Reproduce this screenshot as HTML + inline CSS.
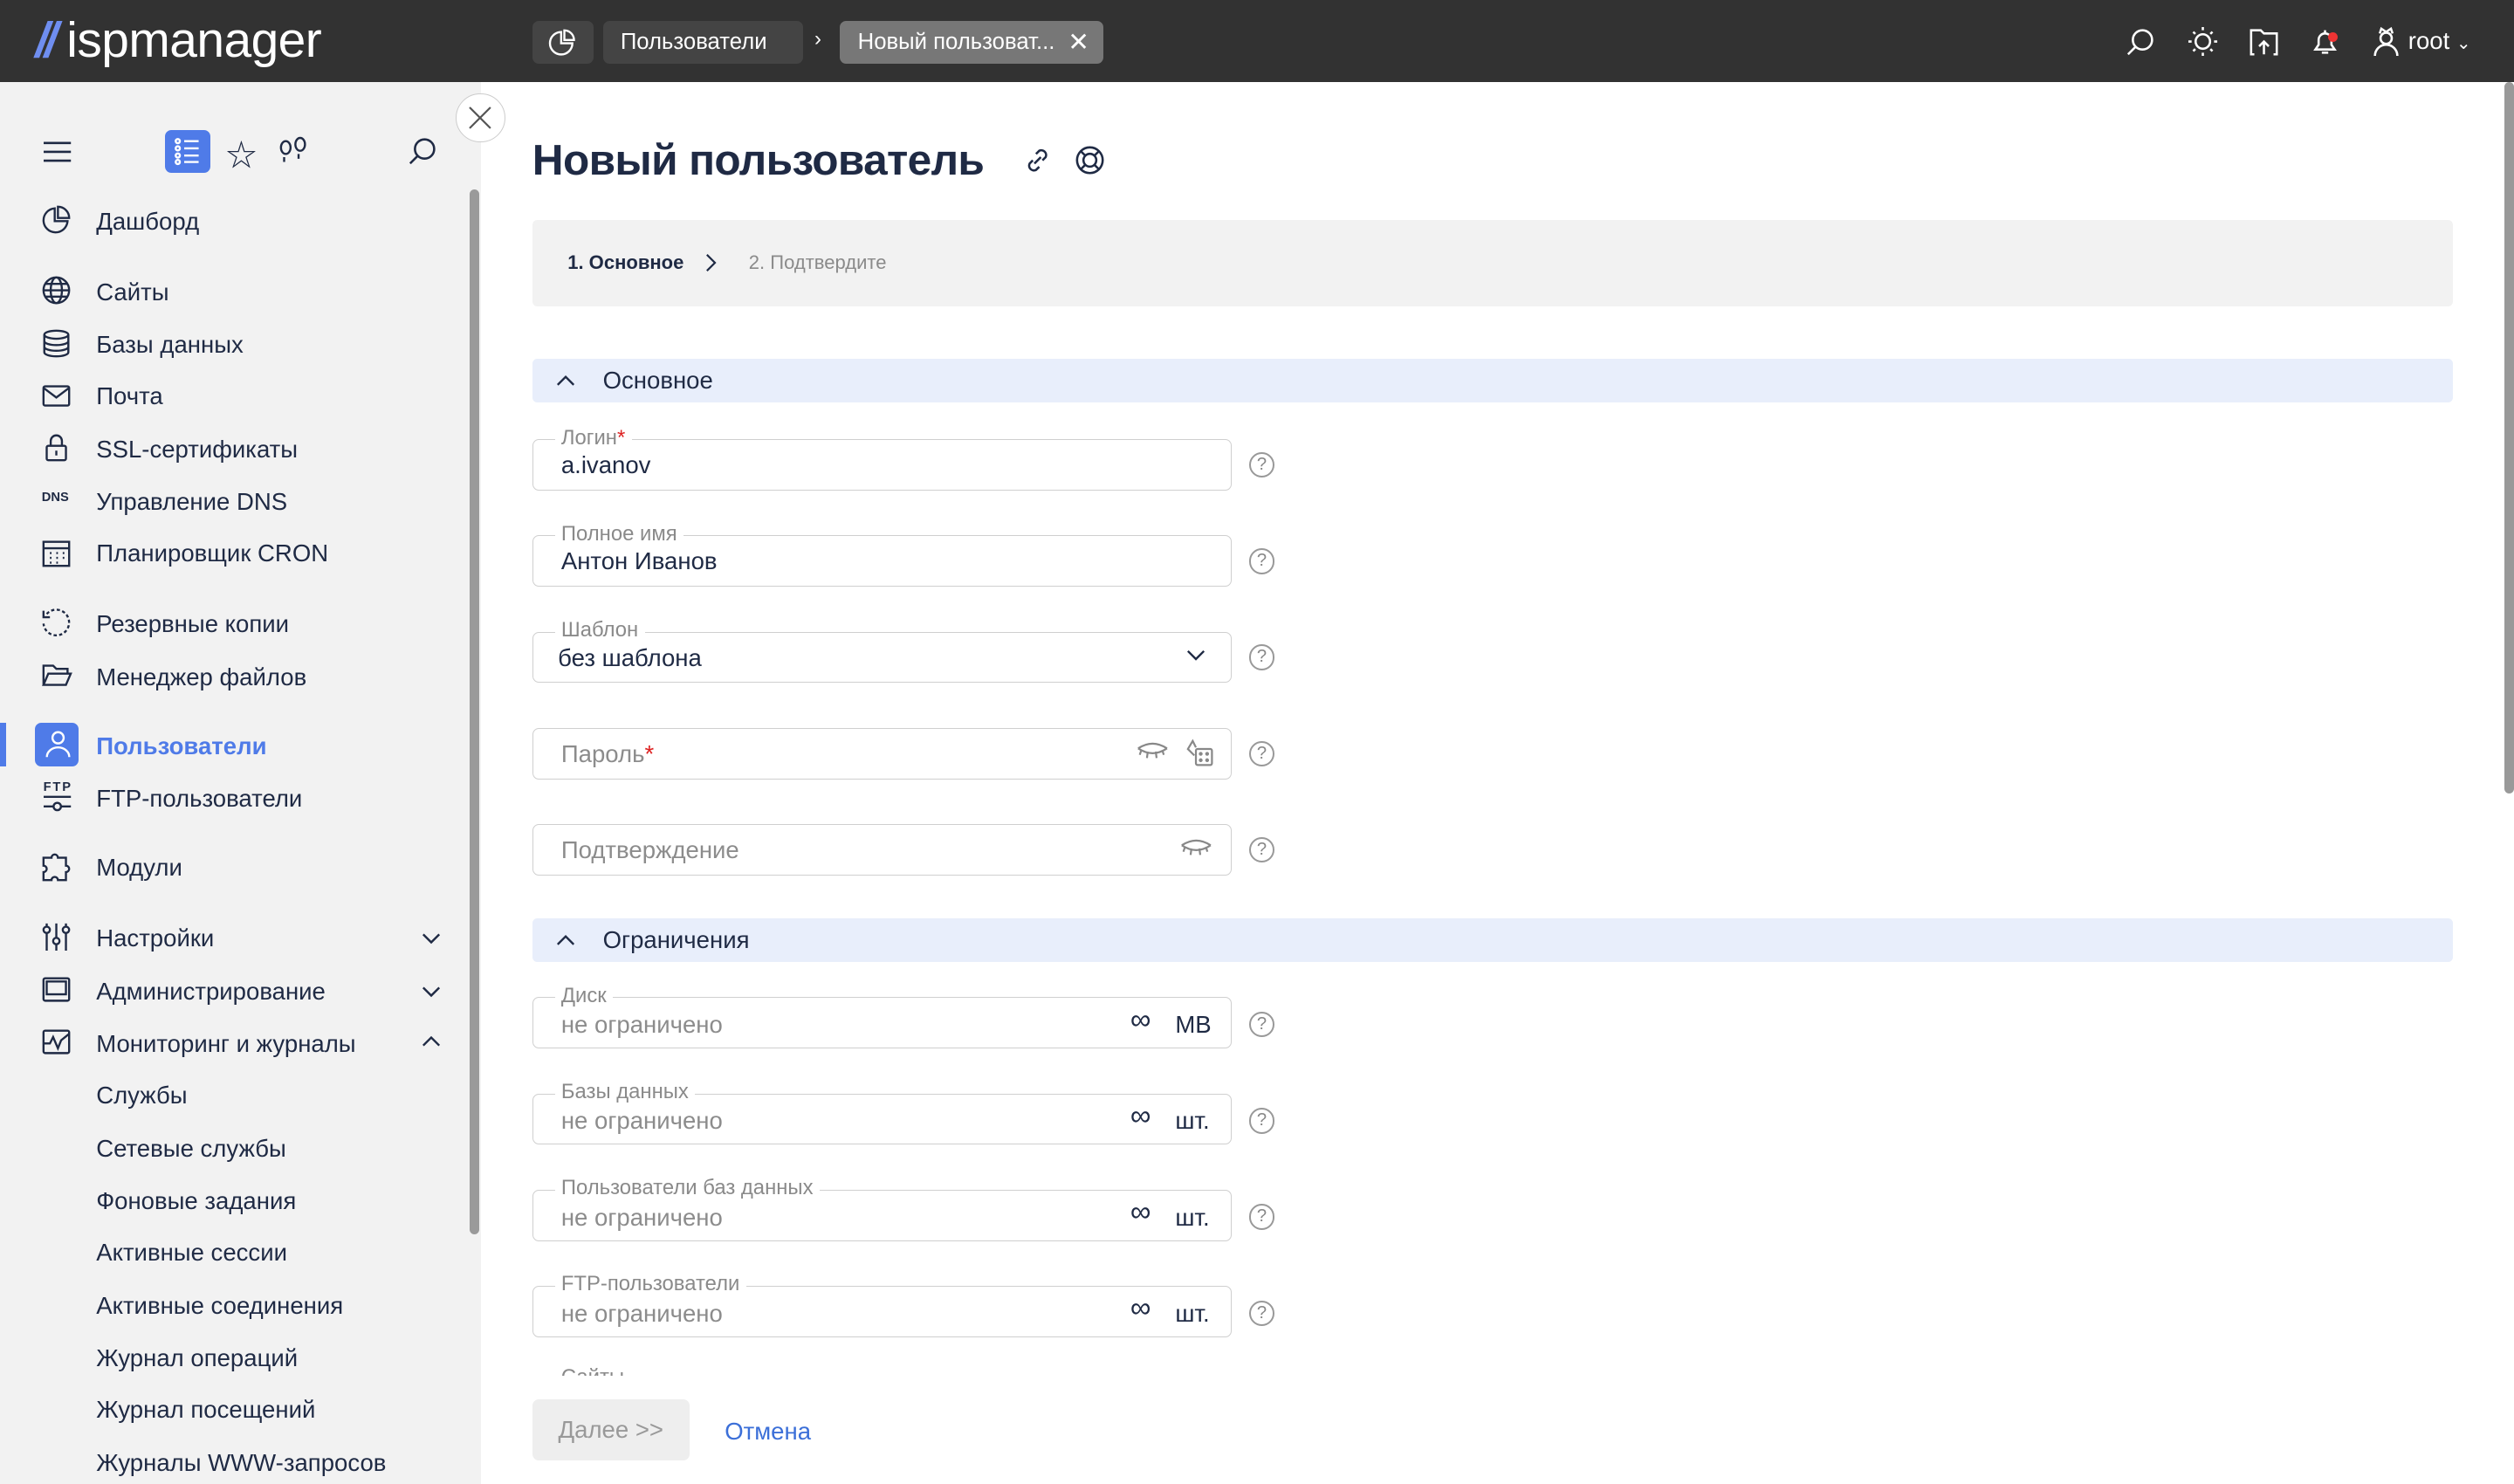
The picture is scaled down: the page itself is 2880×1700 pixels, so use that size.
<!DOCTYPE html>
<html><head><meta charset="utf-8"><style>
*{box-sizing:border-box;margin:0;padding:0}
html,body{width:2880px;height:1700px;overflow:hidden;background:#fff}
#w{zoom:1.83673;width:1568px;height:926px;position:relative;font-family:"Liberation Sans","Noto Sans CJK SC",sans-serif;color:#1f2a44}
.a{position:absolute}
.top{left:0;top:0;width:1568px;height:51px;background:#323232}
.side{left:0;top:51px;width:300px;height:875px;background:#f2f2f2}
.it{position:absolute;left:60px;font-size:15px;white-space:nowrap;line-height:18px}
.ic{position:absolute;left:26px;width:18px;height:18px}
.sub{position:absolute;left:60px;font-size:15px;line-height:18px}
.chev{position:absolute;left:263px;width:12px;height:12px}
.fld{position:absolute;left:332px;width:436px;height:32px;border:1px solid #cfcfcf;border-radius:4px;background:#fff}
.lbl{position:absolute;left:346px;font-size:13px;color:#8a8a8a;background:#fff;padding:0 4px;line-height:14px}
.val{position:absolute;left:350px;font-size:15px;line-height:18px}
.ph{color:#8c8c8c}
.q{position:absolute;left:779px;width:16px;height:16px;border:1.3px solid #999;border-radius:50%;font-size:11px;color:#888;text-align:center;line-height:14px}
.sec{position:absolute;left:332px;width:1198px;height:27px;background:#e8eefb;border-radius:3px;font-size:15px;line-height:27px;padding-left:44px}
.unit{position:absolute;left:733px;font-size:15px;line-height:18px}
svg{overflow:visible}
</style></head><body><div id="w">
<div class="a top">
 <div class="a" style="left:22px;top:7px;font-size:31px;color:#fff;font-weight:normal;letter-spacing:-0.3px"><span style="color:#6f8ef0;font-style:italic;font-weight:bold;letter-spacing:-3px">//</span> ispmanager</div>
 <div class="a" style="left:332px;top:13px;width:38px;height:27px;background:#444;border-radius:4px"></div>
 <svg class="a" style="left:343px;top:18px" width="16" height="17" viewBox="0 0 16 17" fill="none" stroke="#fff" stroke-width="1.3"><path d="M7 2A7 7 0 1 0 14 9H7Z"/><path d="M9 1v6h6A6 6 0 0 0 9 1Z"/></svg>
 <div class="a" style="left:376px;top:13px;width:125px;height:27px;background:#444;border-radius:4px;color:#fff;font-size:14px;line-height:27px;padding-left:11px">Пользователи</div>
 <div class="a" style="left:508px;top:17px;color:#fff;font-size:13px">›</div>
 <div class="a" style="left:524px;top:13px;width:164px;height:27px;background:#777;border-radius:4px;color:#fff;font-size:14px;line-height:27px;padding-left:11px">Новый пользоват... <span style="position:absolute;left:142px;font-size:16px">✕</span></div>
 <svg class="a" style="left:1326px;top:17px" width="18" height="18" fill="none" stroke="#fff" stroke-width="1.4"><circle cx="10" cy="8" r="6"/><path d="M6 12L1 17"/></svg>
 <svg class="a" style="left:1365px;top:17px" width="18" height="18" fill="none" stroke="#fff" stroke-width="1.4"><circle cx="9" cy="9" r="4.5"/><path d="M9 0v2M9 16v2M0 9h2M16 9h2M3 3l1.3 1.3M13.7 13.7L15 15M3 15l1.3-1.3M13.7 4.3L15 3"/></svg>
 <svg class="a" style="left:1403px;top:17px" width="18" height="18" fill="none" stroke="#fff" stroke-width="1.4"><path d="M3 17H1V2h6l2 2h8v13h-2M9 17V9M6 12l3-3 3 3"/></svg>
 <svg class="a" style="left:1441px;top:17px" width="18" height="18" fill="none" stroke="#fff" stroke-width="1.4"><path d="M3 14h12l-2-3V8a4 4 0 0 0-8 0v3zM7 16h4M9 2v2"/></svg>
 <div class="a" style="left:1452px;top:20px;width:6px;height:6px;background:#e33;border-radius:50%"></div>
 <svg class="a" style="left:1479px;top:17px" width="18" height="18" fill="none" stroke="#fff" stroke-width="1.4"><circle cx="9" cy="7" r="3.5"/><path d="M2 18a7 7 0 0 1 14 0M5 4l1-3 3 2 3-2 1 3"/></svg>
 <div class="a" style="left:1502px;top:17px;color:#fff;font-size:15px">root <span style="font-size:11px">⌄</span></div>
</div>

<div class="a side">
 <svg class="a" style="left:27px;top:37px" width="17" height="13" stroke="#1f2a44" stroke-width="1.4"><path d="M0 1h17M0 6.5h17M0 12h17"/></svg>
 <div class="a" style="left:103px;top:30px;width:28px;height:27px;background:#4f7be8;border-radius:4px"></div>
 <svg class="a" style="left:109px;top:35px" width="16" height="17" fill="none" stroke="#fff" stroke-width="1.3"><circle cx="2" cy="2" r="1.3"/><circle cx="2" cy="6.5" r="1.3"/><circle cx="2" cy="11" r="1.3"/><circle cx="2" cy="15" r="1.3"/><path d="M6 2h9M6 6.5h9M6 11h9M6 15h9"/></svg>
 <div class="a" style="left:141px;top:31px;font-size:19px">☆</div>
 <svg class="a" style="left:174px;top:35px" width="18" height="16" fill="none" stroke="#1f2a44" stroke-width="1.3"><ellipse cx="4" cy="6" rx="3" ry="4"/><ellipse cx="13" cy="4" rx="3" ry="4"/><path d="M3 12v3M12 10v3"/></svg>
 <svg class="a" style="left:255px;top:34px" width="18" height="18" fill="none" stroke="#1f2a44" stroke-width="1.4"><circle cx="10" cy="8" r="6"/><path d="M6 12L1 17"/></svg>
 <div class="a" style="left:293px;top:67px;width:6px;height:652px;background:#9a9a9a;border-radius:3px"></div>
</div>
<div class="a" style="left:284px;top:58px;width:31px;height:31px;border-radius:50%;background:#fff;border:1px solid #ccc"></div>
<svg class="a" style="left:293px;top:67px" width="13" height="13" stroke="#555" stroke-width="1.2"><path d="M0 0l13 13M13 0L0 13"/></svg>

<div id="nav">
<svg class="ic" style="top:128px" viewBox="0 0 18 18" fill="none" stroke="#1f2a44" stroke-width="1.3"><path d="M8 2A7.5 7.5 0 1 0 16 10H8Z"/><path d="M10 1v7h7A7 7 0 0 0 10 1Z"/></svg><div class="it" style="top:129px">Дашборд</div>
<svg class="ic" style="top:172px" viewBox="0 0 18 18" fill="none" stroke="#1f2a44" stroke-width="1.3"><circle cx="9" cy="9" r="8"/><ellipse cx="9" cy="9" rx="3.5" ry="8"/><path d="M1 9h16M2 5h14M2 13h14"/></svg><div class="it" style="top:173px">Сайты</div>
<svg class="ic" style="top:205px" viewBox="0 0 18 18" fill="none" stroke="#1f2a44" stroke-width="1.3"><ellipse cx="9" cy="3.5" rx="7.5" ry="2.5"/><path d="M1.5 3.5v11c0 1.4 3.4 2.5 7.5 2.5s7.5-1.1 7.5-2.5v-11M1.5 7.5c0 1.4 3.4 2.5 7.5 2.5s7.5-1.1 7.5-2.5M1.5 11c0 1.4 3.4 2.5 7.5 2.5s7.5-1.1 7.5-2.5"/></svg><div class="it" style="top:206px">Базы данных</div>
<svg class="ic" style="top:238px" viewBox="0 0 18 18" fill="none" stroke="#1f2a44" stroke-width="1.3"><rect x="1" y="3" width="16" height="12" rx="1"/><path d="M1 4l8 6 8-6"/></svg><div class="it" style="top:238px">Почта</div>
<svg class="ic" style="top:270px" viewBox="0 0 18 18" fill="none" stroke="#1f2a44" stroke-width="1.3"><rect x="3" y="8" width="12" height="9" rx="1"/><path d="M5.5 8V5a3.5 3.5 0 0 1 7 0v3M9 11v3"/></svg><div class="it" style="top:271px">SSL-сертификаты</div>
<div class="a" style="left:26px;top:306px;font-size:8px;font-weight:bold">DNS</div><div class="it" style="top:304px">Управление DNS</div>
<svg class="ic" style="top:336px" viewBox="0 0 18 18" fill="none" stroke="#1f2a44" stroke-width="1.3"><rect x="1" y="2" width="16" height="15"/><path d="M1 6h16M5 9h1M9 9h1M13 9h1M5 12h1M9 12h1M13 12h1M5 15h1M9 15h1"/></svg><div class="it" style="top:336px">Планировщик CRON</div>
<svg class="ic" style="top:379px" viewBox="0 0 18 18" fill="none" stroke="#1f2a44" stroke-width="1.3"><path d="M3 4a8 8 0 1 1-2 6" stroke-dasharray="2 1.5"/><path d="M1 2v4h4"/></svg><div class="it" style="top:380px">Резервные копии</div>
<svg class="ic" style="top:412px" viewBox="0 0 18 18" fill="none" stroke="#1f2a44" stroke-width="1.3"><path d="M1 15V3h6l2 2h7v3M1 15l3-7h14l-3 7z"/></svg><div class="it" style="top:413px">Менеджер файлов</div>
<div class="a" style="left:0;top:451px;width:4px;height:27px;background:#4f7be8"></div>
<div class="a" style="left:22px;top:451px;width:27px;height:27px;background:#4f7be8;border-radius:4px"></div>
<svg class="a" style="left:27px;top:455px" width="18" height="18" fill="none" stroke="#fff" stroke-width="1.3"><circle cx="9" cy="5" r="3.5"/><path d="M2 17a7 6 0 0 1 14 0"/></svg>
<div class="it" style="top:456px;color:#4f7be8;font-weight:bold">Пользователи</div>
<div class="a" style="left:27px;top:487px;font-size:8px;font-weight:bold;letter-spacing:1px">FTP</div><svg class="a" style="left:27px;top:496px" width="18" height="10" fill="none" stroke="#1f2a44" stroke-width="1.3"><path d="M0 1h17M0 7h6M11 7h6"/><circle cx="8.5" cy="7" r="2.3"/></svg><div class="it" style="top:489px">FTP-пользователи</div>
<svg class="ic" style="top:532px" viewBox="0 0 18 18" fill="none" stroke="#1f2a44" stroke-width="1.3"><path d="M1 3h5a2 2 0 0 1 4 0h5v5a2 2 0 0 1 0 4v5h-5a2 2 0 0 0-4 0H1v-5a2 2 0 0 0 0-4z"/></svg><div class="it" style="top:532px">Модули</div>
<svg class="ic" style="top:575px" viewBox="0 0 18 18" fill="none" stroke="#1f2a44" stroke-width="1.3"><path d="M3 1v17M9 1v17M15 1v17"/><circle cx="3" cy="5" r="2" fill="#f2f2f2"/><circle cx="9" cy="12" r="2" fill="#f2f2f2"/><circle cx="15" cy="5" r="2" fill="#f2f2f2"/></svg><div class="it" style="top:576px">Настройки</div>
<svg class="ic" style="top:608px" viewBox="0 0 18 18" fill="none" stroke="#1f2a44" stroke-width="1.3"><rect x="1" y="2" width="16" height="14" rx="1"/><rect x="3" y="4" width="12" height="8"/></svg><div class="it" style="top:609px">Администрирование</div>
<svg class="ic" style="top:641px" viewBox="0 0 18 18" fill="none" stroke="#1f2a44" stroke-width="1.3"><rect x="1" y="2" width="16" height="14" rx="1"/><path d="M1 10h4l2-4 3 7 2-5 5-4"/></svg><div class="it" style="top:642px">Мониторинг и журналы</div>
<svg class="chev" style="top:579px" viewBox="0 0 12 12" fill="none" stroke="#1f2a44" stroke-width="1.3"><path d="M1 4l5 5 5-5"/></svg>
<svg class="chev" style="top:612px" viewBox="0 0 12 12" fill="none" stroke="#1f2a44" stroke-width="1.3"><path d="M1 4l5 5 5-5"/></svg>
<svg class="chev" style="top:644px" viewBox="0 0 12 12" fill="none" stroke="#1f2a44" stroke-width="1.3"><path d="M1 8l5-5 5 5"/></svg>
<div class="sub" style="top:674px">Службы</div>
<div class="sub" style="top:707px">Сетевые службы</div>
<div class="sub" style="top:740px">Фоновые задания</div>
<div class="sub" style="top:772px">Активные сессии</div>
<div class="sub" style="top:805px">Активные соединения</div>
<div class="sub" style="top:838px">Журнал операций</div>
<div class="sub" style="top:870px">Журнал посещений</div>
<div class="sub" style="top:903px">Журналы WWW-запросов</div>
</div>

<div class="a" style="left:332px;top:83px;font-size:27px;font-weight:bold;line-height:34px;letter-spacing:-0.35px">Новый пользователь</div>
<svg class="a" style="left:639px;top:92px" width="16" height="16" fill="none" stroke="#1f2a44" stroke-width="1.4"><path d="M6 10l4-4M7 4l2-2a3 3 0 0 1 4 4l-2 2M9 12l-2 2a3 3 0 0 1-4-4l2-2"/></svg>
<svg class="a" style="left:671px;top:91px" width="18" height="18" fill="none" stroke="#1f2a44" stroke-width="1.4"><circle cx="9" cy="9" r="8"/><circle cx="9" cy="9" r="4"/><path d="M3.5 3.5l2.7 2.7M14.5 3.5l-2.7 2.7M3.5 14.5l2.7-2.7M14.5 14.5l-2.7-2.7"/></svg>
<div class="a" style="left:332px;top:137px;width:1198px;height:54px;background:#f2f2f2;border-radius:3px"></div>
<div class="a" style="left:354px;top:157px;font-size:12px;font-weight:bold">1. Основное</div>
<svg class="a" style="left:440px;top:158px" width="8" height="12" fill="none" stroke="#1f2a44" stroke-width="1.2"><path d="M1 1l5 5-5 5"/></svg>
<div class="a" style="left:467px;top:157px;font-size:12px;color:#8a8a8a">2. Подтвердите</div>

<div class="sec" style="top:224px">Основное</div>
<svg class="a" style="left:347px;top:233px" width="12" height="8" fill="none" stroke="#1f2a44" stroke-width="1.3"><path d="M1 7l5-5 5 5"/></svg>

<div class="fld" style="top:274px"></div><div class="lbl" style="top:266px">Логин<span style="color:#d22">*</span></div><div class="val" style="top:281px">a.ivanov</div><div class="q" style="top:282px">?</div>
<div class="fld" style="top:334px"></div><div class="lbl" style="top:326px">Полное имя</div><div class="val" style="top:341px">Антон Иванов</div><div class="q" style="top:342px">?</div>
<div class="fld" style="top:394px"></div><div class="lbl" style="top:386px">Шаблон</div><div class="val" style="top:401px;left:348px">без шаблона</div><svg class="a" style="left:740px;top:405px" width="12" height="8" fill="none" stroke="#1f2a44" stroke-width="1.3"><path d="M1 1l5 5 5-5"/></svg><div class="q" style="top:402px">?</div>
<div class="fld" style="top:454px"></div><div class="val ph" style="top:461px">Пароль<span style="color:#d22">*</span></div>
<svg class="a" style="left:709px;top:463px" width="20" height="12" fill="none" stroke="#888" stroke-width="1.2"><path d="M1 4q9-6 18 0M3 5l-1 3M7 6l-.5 4M12 6l.5 4M16 5l1 3M1 4q9 6 18 0"/></svg>
<svg class="a" style="left:740px;top:461px" width="18" height="17" fill="none" stroke="#888" stroke-width="1.2"><rect x="6" y="6" width="10" height="10" rx="1"/><path d="M6 5L4 1 1 6l4 4"/><circle cx="9" cy="9" r=".6"/><circle cx="13" cy="13" r=".6"/><circle cx="13" cy="9" r=".6"/><circle cx="9" cy="13" r=".6"/></svg>
<div class="q" style="top:462px">?</div>
<div class="fld" style="top:514px"></div><div class="val ph" style="top:521px">Подтверждение</div>
<svg class="a" style="left:736px;top:523px" width="20" height="12" fill="none" stroke="#888" stroke-width="1.2"><path d="M1 4q9-6 18 0M3 5l-1 3M7 6l-.5 4M12 6l.5 4M16 5l1 3M1 4q9 6 18 0"/></svg>
<div class="q" style="top:522px">?</div>

<div class="sec" style="top:573px">Ограничения</div>
<svg class="a" style="left:347px;top:582px" width="12" height="8" fill="none" stroke="#1f2a44" stroke-width="1.3"><path d="M1 7l5-5 5 5"/></svg>

<div class="fld" style="top:622px"></div><div class="lbl" style="top:614px">Диск</div><div class="val ph" style="top:630px">не ограничено</div><div class="a" style="left:705px;top:626px;font-size:18px">∞</div><div class="unit" style="top:630px">MB</div><div class="q" style="top:631px">?</div>
<div class="fld" style="top:682px"></div><div class="lbl" style="top:674px">Базы данных</div><div class="val ph" style="top:690px">не ограничено</div><div class="a" style="left:705px;top:686px;font-size:18px">∞</div><div class="unit" style="top:690px">шт.</div><div class="q" style="top:691px">?</div>
<div class="fld" style="top:742px"></div><div class="lbl" style="top:734px">Пользователи баз данных</div><div class="val ph" style="top:750px">не ограничено</div><div class="a" style="left:705px;top:746px;font-size:18px">∞</div><div class="unit" style="top:750px">шт.</div><div class="q" style="top:751px">?</div>
<div class="fld" style="top:802px"></div><div class="lbl" style="top:794px">FTP-пользователи</div><div class="val ph" style="top:810px">не ограничено</div><div class="a" style="left:705px;top:806px;font-size:18px">∞</div><div class="unit" style="top:810px">шт.</div><div class="q" style="top:811px">?</div>
<div class="lbl" style="top:852px;height:6px;overflow:hidden">Сайты</div>

<div class="a" style="left:300px;top:858px;width:1262px;height:68px;background:#fff"></div>
<div class="a" style="left:332px;top:873px;width:98px;height:38px;background:#eee;border-radius:4px;color:#999;font-size:15px;line-height:38px;text-align:center">Далее &gt;&gt;</div>
<div class="a" style="left:452px;top:884px;color:#3b6fd8;font-size:15px">Отмена</div>
<div class="a" style="left:1562px;top:51px;width:6px;height:444px;background:#999;border-radius:3px"></div>
</div></body></html>
